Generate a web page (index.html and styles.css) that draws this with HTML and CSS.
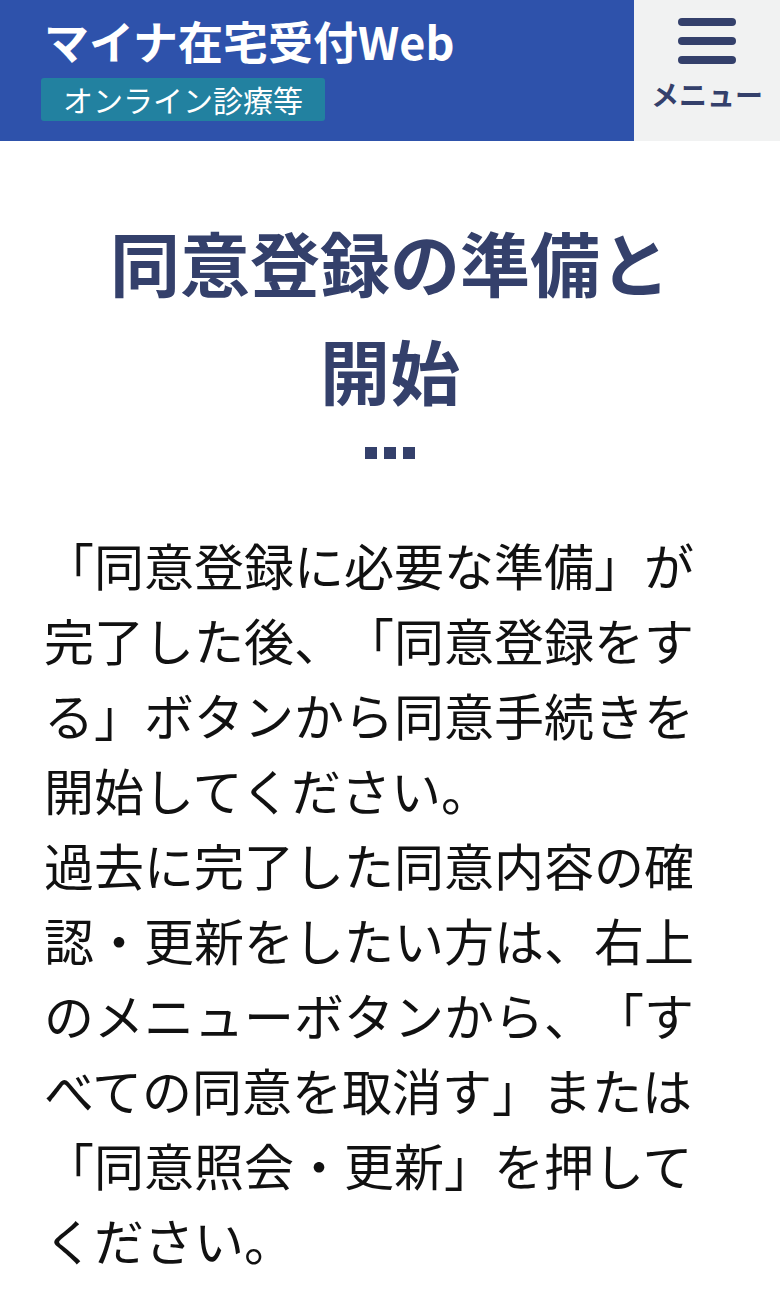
FILE: index.html
```html
<!DOCTYPE html>
<html lang="ja">
<head>
  <meta charset="utf-8">
  <title>マイナ在宅受付Web</title>
  <link rel="stylesheet" href="styles.css">
</head>
<body>

  <!--HEADER-->
  <header class="site-header">
    <div class="brand">
      <div class="brand-title">マイナ在宅受付Web</div>
      <div class="brand-badge">オンライン診療等</div>
    </div>
    <button class="menu-button">
      <span class="menu-bar"></span>
      <span class="menu-bar"></span>
      <span class="menu-bar"></span>
      <span class="menu-label">メニュー</span>
    </button>
  </header>

  <!--MAIN CONTENT-->
  <main class="content">
    <h1 class="page-title">同意登録の準備と開始</h1>
    <div class="title-dots">
      <span></span><span></span><span></span>
    </div>

    <p class="lead">「同意登録に必要な準備」が完了した後、「同意登録をする」ボタンから同意手続きを開始してください。<br>過去に完了した同意内容の確認・更新をしたい方は、右上のメニューボタンから、「すべての同意を取消す」または「同意照会・更新」を押してください。</p>
  </main>

</body>
</html>
```

FILE: styles.css
```css
body {
  margin: 0;
  background-color: #fff;
  font-family: "Noto Sans CJK JP", "Noto Sans", sans-serif;
  color: #111;
  text-spacing-trim: space-all; /* keep full-width punctuation */
}
/* Header bar */
.site-header {
  display: flex;
  height: 141px;
}
.brand {
  flex: 1;
  background-color: #2e52ab;
  padding: 14px 0 0 41px;
  box-sizing: border-box;
}
.brand-title {
  margin-left: 3px;
  font-size: 45px;
  font-weight: bold;
  line-height: 54px;
  color: #fff;
}
.brand-badge {
  display: inline-block;
  margin-top: 10px;
  padding: 0 22px;
  height: 43px;
  line-height: 43px;
  font-size: 30px;
  color: #fff;
  background-color: #2281a0;
  border-radius: 3px;
}
/* Menu button on the right */
.menu-button {
  width: 146px;
  display: flex;
  flex-direction: column;
  align-items: center;
  padding: 18px 0 0;
  margin: 0;
  border: none;
  background-color: #f1f2f2;
  cursor: pointer;
  font-family: inherit;
}
.menu-bar {
  display: block;
  width: 58px;
  height: 8px;
  border-radius: 4px;
  background-color: #34406b;
  margin-bottom: 11px;
}
.menu-label {
  margin-top: 2px;
  font-size: 28px;
  font-weight: bold;
  line-height: 34px;
  color: #34406b;
}
/* Main content */
.content {
  padding: 0 44px;
}
.page-title {
  margin: 67px 0 0;
  padding: 0 40px;
  font-size: 70px;
  line-height: 108px;
  font-weight: bold;
  text-align: center;
  color: #34406b;
}
.title-dots {
  display: flex;
  justify-content: center;
  gap: 7px;
  margin-top: 23px;
}
.title-dots span {
  width: 12px;
  height: 12px;
  background-color: #34406b;
}
.lead {
  margin: 68px 0 0;
  font-size: 50px;
  line-height: 75px;
}
```
